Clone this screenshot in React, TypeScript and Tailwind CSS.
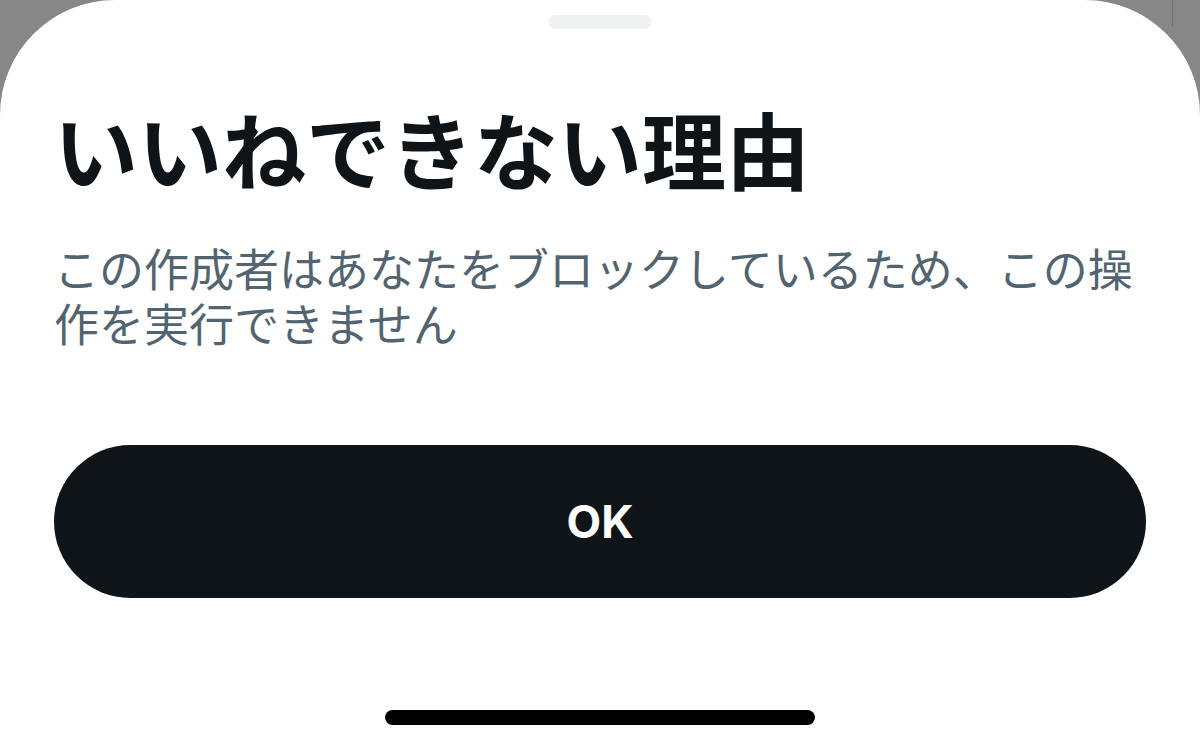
export default function App() {
  return (
    <div className="relative h-[749px] w-[1200px] overflow-hidden bg-[#878787]">
      {/* artefact line in the top-right corner of the screenshot */}
      <div className="absolute right-[27px] top-0 h-[26px] w-px bg-[#6f6f6f]" />

      <div className="flex h-full flex-col rounded-t-[115px] bg-white px-[54px]">
        {/* drag handle */}
        <div className="mx-auto mt-[15px] h-[14px] w-[104px] shrink-0 rounded-full bg-[#eff1f3]" />

        <h1
          className="mt-[77px] text-[84px] font-bold leading-[84px] text-[#0f1419]"
          style={{ fontFamily: '"Noto Sans CJK JP", "Noto Sans", sans-serif' }}
        >
          いいねできない理由
        </h1>

        <p
          className="mt-[50px] text-[45px] leading-[55px] text-[#536471]"
          style={{ fontFamily: '"Noto Sans CJK JP", "Noto Sans", sans-serif' }}
        >
          この作成者はあなたをブロックしているため、この操作を実行できません
        </p>

        <button
          className="mt-[95px] flex h-[153px] w-full shrink-0 items-center justify-center rounded-full bg-[#0f1419] text-[45px] font-bold text-white"
          style={{ fontFamily: 'Inter, "Liberation Sans", sans-serif' }}
        >
          OK
        </button>

        {/* home indicator */}
        <div className="mx-auto mt-[112px] h-[15px] w-[430px] shrink-0 rounded-full bg-black" />
      </div>
    </div>
  )
}
